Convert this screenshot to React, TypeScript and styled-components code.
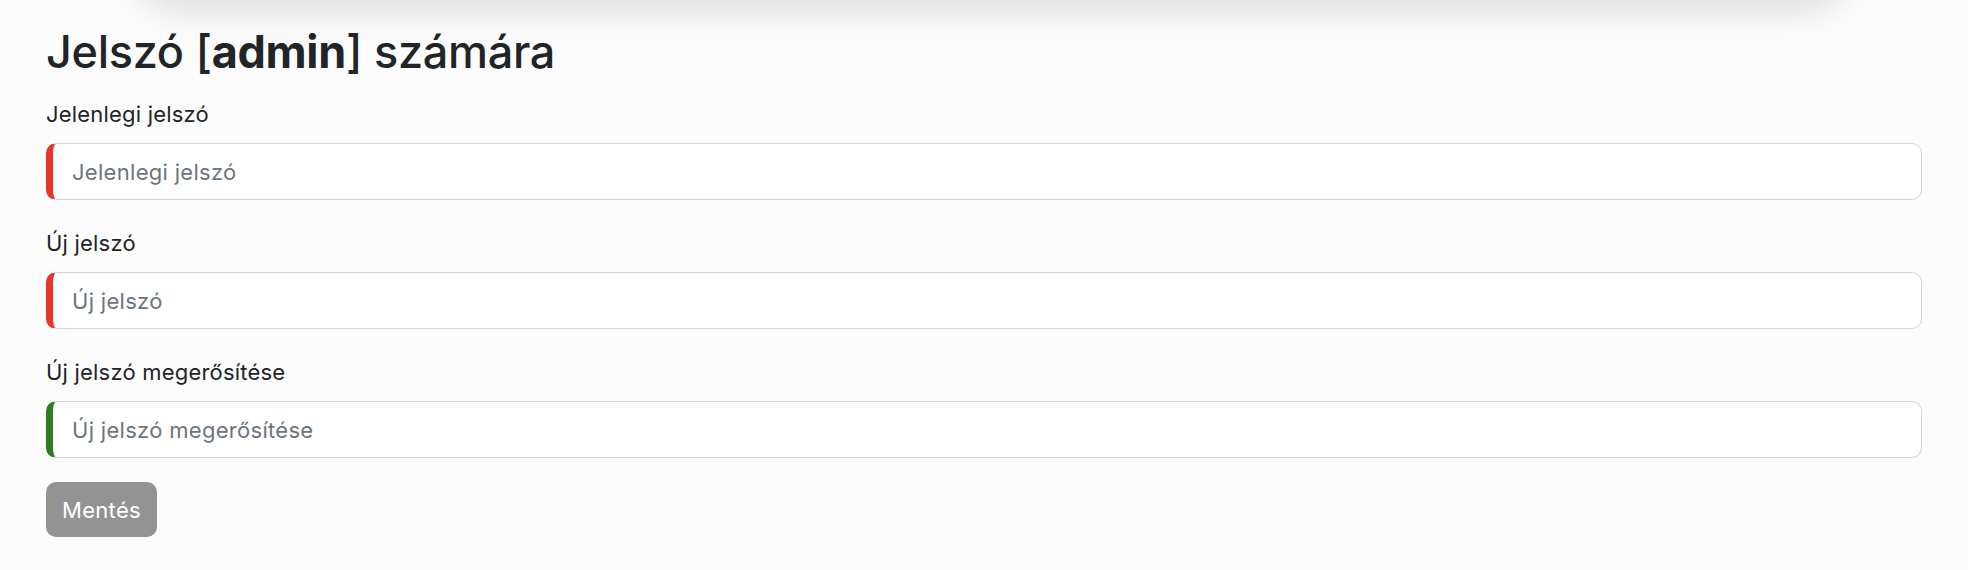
import React from 'react'
import styled, { createGlobalStyle } from 'styled-components'

const GlobalStyle = createGlobalStyle`
  body {
    margin: 0;
    background-color: #fcfcfc;
    font-family: Inter, 'Noto Sans', 'Liberation Sans', sans-serif;
    color: #212529;
  }
  * {
    box-sizing: border-box;
  }
`

const Page = styled.div`
  position: relative;
  width: 100%;
  min-height: 570px;
  overflow: hidden;
  padding: 25px 46px 0;
`

// bottom edge of the floating navbar that sits above the visible area
const NavShadow = styled.div`
  position: absolute;
  top: -90px;
  left: 140px;
  right: 125px;
  height: 90px;
  border-radius: 40px;
  background-color: #fcfcfc;
  box-shadow: 0 0 40px 8px rgba(0, 0, 0, 0.15);
`

const Title = styled.h2`
  margin: 0 0 20px;
  font-size: 45px;
  line-height: 54px;
  font-weight: 500;
  letter-spacing: -0.3px;
  b {
    font-weight: 700;
  }
`

const Form = styled.form`
  display: flex;
  flex-direction: column;
`

const Group = styled.div`
  display: flex;
  flex-direction: column;
  margin-bottom: 28px;
  &:last-of-type {
    margin-bottom: 24px;
  }
`

const Label = styled.label`
  font-size: 22px;
  line-height: 31px;
  letter-spacing: 0.2px;
  margin-bottom: 13px;
`

const Input = styled.input<{ $valid: boolean }>`
  width: 100%;
  height: 57px;
  padding: 0 20px 0 19px;
  font-family: inherit;
  font-size: 22px;
  letter-spacing: 0.3px;
  color: #212529;
  background-color: #fff;
  border: 1px solid #d3d5d9;
  border-left: 7px solid ${(p) => (p.$valid ? '#2f7d20' : '#e8352a')};
  border-radius: 10px;
  outline: none;
  &::placeholder {
    color: #6c757d;
  }
`

const SaveButton = styled.button`
  align-self: flex-start;
  height: 55px;
  padding: 0 16px;
  font-family: inherit;
  font-size: 22px;
  letter-spacing: 0.3px;
  color: #fff;
  background-color: #939393;
  border: none;
  border-radius: 10px;
`

const fields = [
  { id: 'current', label: 'Jelenlegi jelszó', valid: false },
  { id: 'new', label: 'Új jelszó', valid: false },
  { id: 'confirm', label: 'Új jelszó megerősítése', valid: true },
]

export default function App() {
  return (
    <Page>
      <GlobalStyle />
      <NavShadow />
      <Title>
        Jelszó [<b>admin</b>] számára
      </Title>
      <Form onSubmit={(e) => e.preventDefault()}>
        {fields.map((f) => (
          <Group key={f.id}>
            <Label htmlFor={f.id}>{f.label}</Label>
            <Input id={f.id} type="password" placeholder={f.label} $valid={f.valid} />
          </Group>
        ))}
        <SaveButton type="submit">Mentés</SaveButton>
      </Form>
    </Page>
  )
}
